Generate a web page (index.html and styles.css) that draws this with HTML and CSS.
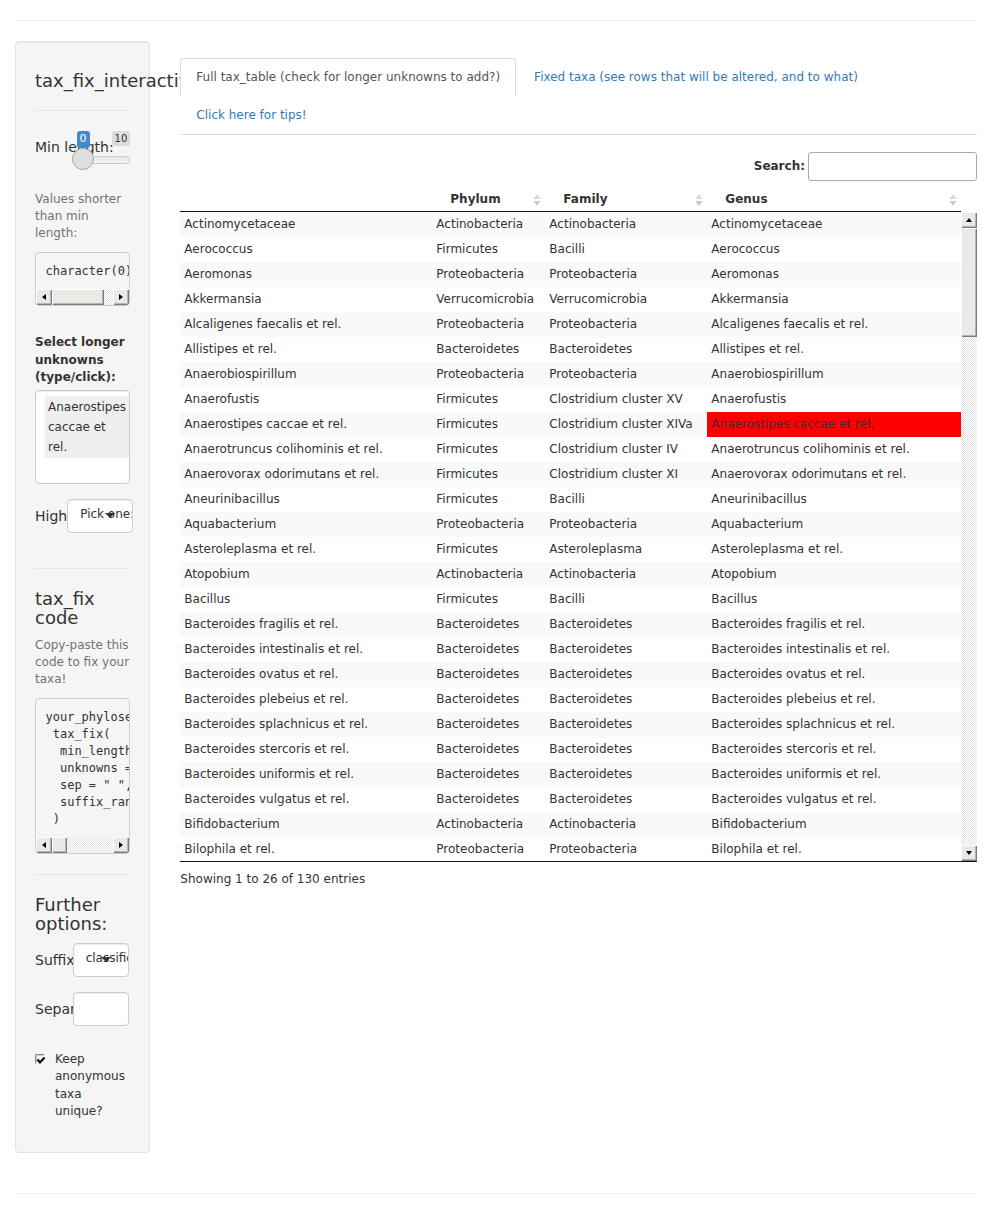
FILE: index.html
```html
<!DOCTYPE html>
<html lang="en">
<head>
<meta charset="utf-8">
<title>tax_fix_interactive</title>
<link rel="stylesheet" href="styles.css">
</head>
<body>
<div class="page">
  <hr class="rule">
  <div class="layout">
    <aside class="side-col">
      <div class="well">
        <h4 class="side-title">tax_fix_interactive</h4>
        <hr class="well-rule">
        <div class="slider-group">
          <label class="slider-label">Min length:</label>
          <div class="irs">
            <span class="irs-line"></span>
            <span class="irs-max">10</span>
            <span class="irs-handle"></span>
            <span class="irs-single">0</span>
          </div>
        </div>
        <p class="help">Values shorter than min length:</p>
        <div class="out out-gap">
          <pre class="out-text">character(0)</pre>
          <div class="hscroll"><span class="sb-btn sb-left"></span><span class="sb-thumb thumb-a"></span><span class="sb-rest"></span><span class="sb-btn sb-right"></span></div>
        </div>

        <label class="sel-label">Select longer unknowns (type/click):</label>
        <div class="sel-multi">
          <div class="sel-item">Anaerostipes caccae et rel.</div>
          <div class="sel-input"></div>
        </div>

        <div class="inline-row row-last">
          <span class="inline-label w-high">Highlight:</span>
          <div class="box caret w-high-box">Pick one:</div>
        </div>

        <hr class="well-rule">
        <h4 class="side-title">tax_fix code</h4>
        <p class="help">Copy-paste this code to fix your taxa!</p>
        <div class="out">
          <pre class="out-text">your_phyloseq %&gt;%
 tax_fix(
  min_length = 0,
  unknowns = c("Anaerostipes caccae et rel."),
  sep = " ", anon_unique = TRUE,
  suffix_rank = "classification"
 )</pre>
          <div class="hscroll"><span class="sb-btn sb-left"></span><span class="sb-thumb thumb-b"></span><span class="sb-rest"></span><span class="sb-btn sb-right"></span></div>
        </div>

        <hr class="well-rule">
        <h4 class="side-title">Further options:</h4>
        <div class="inline-row">
          <span class="inline-label w-suffix">Suffix rank:</span>
          <div class="box caret w-box">classification</div>
        </div>
        <div class="inline-row">
          <span class="inline-label w-suffix">Separator:</span>
          <input class="box w-box text-input" type="text" value="">
        </div>
        <label class="check">
          <span class="cb"><svg width="13" height="13" viewBox="0 0 13 13"><path d="M0.5 9.5V0.5H9.5" fill="none" stroke="#8a8a8a" stroke-width="1"/><path d="M1.5 8.5V1.5H8.5" fill="none" stroke="#c8c8c8" stroke-width="1"/><path d="M2.5 5.5L5 8.5L9.5 3.5" fill="none" stroke="#000" stroke-width="2"/></svg></span>
          <span>Keep anonymous taxa unique?</span>
        </label>
      </div>
    </aside>

    <main class="main-col">
      <ul class="tabs">
        <li class="tab active"><a href="#">Full tax_table (check for longer unknowns to add?)</a></li>
        <li class="tab"><a href="#">Fixed taxa (see rows that will be altered, and to what)</a></li>
        <li class="tab"><a href="#">Click here for tips!</a></li>
      </ul>

      <div class="dt-filter">
        <label for="q">Search:</label>
        <input id="q" type="search">
      </div>

      <div class="dt-head">
        <table class="dt">
          <colgroup><col class="c1"><col class="c2"><col class="c3"><col></colgroup>
          <thead>
            <tr>
              <th class="th-blank"></th>
              <th><div class="th-in"><span>Phylum</span><svg class="sort" width="8" height="14" viewBox="0 0 8 14"><path d="M4 1L7.5 6H0.5Z" fill="#d8d8d8"/><path d="M4 13L7.5 8H0.5Z" fill="#c8c8c8"/></svg></div></th>
              <th><div class="th-in"><span>Family</span><svg class="sort" width="8" height="14" viewBox="0 0 8 14"><path d="M4 1L7.5 6H0.5Z" fill="#d8d8d8"/><path d="M4 13L7.5 8H0.5Z" fill="#c8c8c8"/></svg></div></th>
              <th><div class="th-in"><span>Genus</span><svg class="sort" width="8" height="14" viewBox="0 0 8 14"><path d="M4 1L7.5 6H0.5Z" fill="#d8d8d8"/><path d="M4 13L7.5 8H0.5Z" fill="#c8c8c8"/></svg></div></th>
            </tr>
          </thead>
        </table>
      </div>
      <div class="dt-body">
        <div class="dt-view">
        <table class="dt">
          <colgroup><col class="c1"><col class="c2"><col class="c3"><col></colgroup>
          <tbody>
            <tr class="odd"><td>Actinomycetaceae</td><td>Actinobacteria</td><td>Actinobacteria</td><td>Actinomycetaceae</td></tr>
            <tr><td>Aerococcus</td><td>Firmicutes</td><td>Bacilli</td><td>Aerococcus</td></tr>
            <tr class="odd"><td>Aeromonas</td><td>Proteobacteria</td><td>Proteobacteria</td><td>Aeromonas</td></tr>
            <tr><td>Akkermansia</td><td>Verrucomicrobia</td><td>Verrucomicrobia</td><td>Akkermansia</td></tr>
            <tr class="odd"><td>Alcaligenes faecalis et rel.</td><td>Proteobacteria</td><td>Proteobacteria</td><td>Alcaligenes faecalis et rel.</td></tr>
            <tr><td>Allistipes et rel.</td><td>Bacteroidetes</td><td>Bacteroidetes</td><td>Allistipes et rel.</td></tr>
            <tr class="odd"><td>Anaerobiospirillum</td><td>Proteobacteria</td><td>Proteobacteria</td><td>Anaerobiospirillum</td></tr>
            <tr><td>Anaerofustis</td><td>Firmicutes</td><td>Clostridium cluster XV</td><td>Anaerofustis</td></tr>
            <tr class="odd"><td>Anaerostipes caccae et rel.</td><td>Firmicutes</td><td>Clostridium cluster XIVa</td><td class="hl">Anaerostipes caccae et rel.</td></tr>
            <tr><td>Anaerotruncus colihominis et rel.</td><td>Firmicutes</td><td>Clostridium cluster IV</td><td>Anaerotruncus colihominis et rel.</td></tr>
            <tr class="odd"><td>Anaerovorax odorimutans et rel.</td><td>Firmicutes</td><td>Clostridium cluster XI</td><td>Anaerovorax odorimutans et rel.</td></tr>
            <tr><td>Aneurinibacillus</td><td>Firmicutes</td><td>Bacilli</td><td>Aneurinibacillus</td></tr>
            <tr class="odd"><td>Aquabacterium</td><td>Proteobacteria</td><td>Proteobacteria</td><td>Aquabacterium</td></tr>
            <tr><td>Asteroleplasma et rel.</td><td>Firmicutes</td><td>Asteroleplasma</td><td>Asteroleplasma et rel.</td></tr>
            <tr class="odd"><td>Atopobium</td><td>Actinobacteria</td><td>Actinobacteria</td><td>Atopobium</td></tr>
            <tr><td>Bacillus</td><td>Firmicutes</td><td>Bacilli</td><td>Bacillus</td></tr>
            <tr class="odd"><td>Bacteroides fragilis et rel.</td><td>Bacteroidetes</td><td>Bacteroidetes</td><td>Bacteroides fragilis et rel.</td></tr>
            <tr><td>Bacteroides intestinalis et rel.</td><td>Bacteroidetes</td><td>Bacteroidetes</td><td>Bacteroides intestinalis et rel.</td></tr>
            <tr class="odd"><td>Bacteroides ovatus et rel.</td><td>Bacteroidetes</td><td>Bacteroidetes</td><td>Bacteroides ovatus et rel.</td></tr>
            <tr><td>Bacteroides plebeius et rel.</td><td>Bacteroidetes</td><td>Bacteroidetes</td><td>Bacteroides plebeius et rel.</td></tr>
            <tr class="odd"><td>Bacteroides splachnicus et rel.</td><td>Bacteroidetes</td><td>Bacteroidetes</td><td>Bacteroides splachnicus et rel.</td></tr>
            <tr><td>Bacteroides stercoris et rel.</td><td>Bacteroidetes</td><td>Bacteroidetes</td><td>Bacteroides stercoris et rel.</td></tr>
            <tr class="odd"><td>Bacteroides uniformis et rel.</td><td>Bacteroidetes</td><td>Bacteroidetes</td><td>Bacteroides uniformis et rel.</td></tr>
            <tr><td>Bacteroides vulgatus et rel.</td><td>Bacteroidetes</td><td>Bacteroidetes</td><td>Bacteroides vulgatus et rel.</td></tr>
            <tr class="odd"><td>Bifidobacterium</td><td>Actinobacteria</td><td>Actinobacteria</td><td>Bifidobacterium</td></tr>
            <tr><td>Bilophila et rel.</td><td>Proteobacteria</td><td>Proteobacteria</td><td>Bilophila et rel.</td></tr>
          </tbody>
        </table>
        </div>
        <div class="vscroll"><span class="sb-btn sb-up"></span><span class="sb-thumb thumb-v"></span><span class="sb-rest"></span><span class="sb-btn sb-down"></span></div>
      </div>
      <div class="dt-info">Showing 1 to 26 of 130 entries</div>
    </main>
  </div>
  <hr class="rule">
</div>
</body>
</html>
```

FILE: styles.css
```css
* { box-sizing: border-box; }
html, body { margin: 0; }
body {
  font-family: "DejaVu Sans", sans-serif;
  font-size: 12px;
  line-height: 1.42857;
  color: #333;
  background: #fff;
}
.page { padding: 0 15px; }
.rule { border: 0; border-top: 1px solid #eee; margin: 20px 0; height: 0; }

.layout {
  display: grid;
  grid-template-columns: 135.33px 1fr;
  column-gap: 30px;
  align-items: start;
}

/* ---------- classic scrollbars ---------- */
.hscroll, .vscroll {
  display: flex;
  flex: none;
  background-color: #fff;
  background-image: repeating-conic-gradient(#e4e4e4 0 25%, #fff 0 50%);
  background-size: 2px 2px;
}
.hscroll { height: 16px; flex-direction: row; }
.vscroll { width: 16px; flex-direction: column; }
.sb-btn {
  flex: none;
  width: 16px; height: 16px;
  display: flex; align-items: center; justify-content: center;
  background: #ebe9e5;
  box-shadow: inset 1px 1px 0 #fff, inset -1px -1px 0 #7c7c7c, inset -2px -2px 0 #b5b5b5;
}
.sb-btn::after { content: ""; border-style: solid; border-color: transparent; }
.sb-up::after { border-width: 0 3.5px 4px; border-bottom-color: #000; margin: -1px 1px 0 0; }
.sb-down::after { border-width: 4px 3.5px 0; border-top-color: #000; margin: 0 1px 0 0; }
.sb-left::after { border-width: 3.5px 4px 3.5px 0; border-right-color: #000; margin: 0 1px 1px 0; }
.sb-right::after { border-width: 3.5px 0 3.5px 4px; border-left-color: #000; margin: 0 0 1px 0; }
.sb-thumb {
  flex: none;
  background: #ebe9e5;
  box-shadow: inset 1px 1px 0 #fff, inset -1px -1px 0 #7c7c7c, inset -2px -2px 0 #b5b5b5;
}
.sb-rest { flex: 1 1 auto; }
.thumb-a { width: 52px; }
.thumb-b { width: 15px; }
.thumb-v { height: 109px; }

/* ---------- sidebar ---------- */
.well {
  background: #f5f5f5;
  border: 1px solid #e3e3e3;
  border-radius: 4px;
  box-shadow: inset 0 1px 1px rgba(0,0,0,.05);
  padding: 19px;
  margin-bottom: 20px;
}
.side-title { font-size: 18px; font-weight: normal; line-height: 19px; margin: 10px 0; }
.well-rule { border: 0; border-top: 1px solid #e6e6e6; margin: 20px 0; height: 0; }

.slider-group { display: grid; margin-bottom: 20px; }
.slider-group > * { grid-area: 1 / 1; }
.slider-label { font-size: 14px; line-height: 20px; margin-top: 6px; align-self: start; }
.irs { position: relative; height: 40px; margin-left: 37px; }
.irs-line {
  position: absolute; left: 0; right: 0; top: 25px; height: 8px;
  border: 1px solid #ccc; border-radius: 8px;
  background: linear-gradient(to bottom, #dedede -50%, #fff 150%);
}
.irs-handle {
  position: absolute; left: 0; top: 17px; width: 22px; height: 22px;
  border: 1px solid #ababab; background: #dedede; border-radius: 50%;
}
.irs-single {
  position: absolute; left: 4.5px; top: 0;
  padding: 1px 3px; font-size: 11px; line-height: 1.333;
  background: #428bca; color: #fff; border-radius: 3px;
}
.irs-max {
  position: absolute; right: 0; top: 0;
  padding: 1px 3px; font-size: 10px; line-height: 1.333;
  background: rgba(0,0,0,.1); color: #333; border-radius: 3px;
}

.help { color: #737373; margin: 5px 0 10px; }

.out {
  background: #f5f5f5;
  border: 1px solid #ccc;
  border-radius: 4px;
  margin: 0 0 10px;
  overflow: hidden;
}
.out-text {
  font-family: "DejaVu Sans Mono", monospace;
  font-size: 12px;
  line-height: 17px;
  color: #333;
  margin: 0;
  padding: 9.5px;
  white-space: pre;
  overflow: hidden;
}
.out-gap { margin-bottom: 28px; }

.sel-label { display: block; font-weight: bold; margin-bottom: 4px; }
.sel-multi {
  display: flex; flex-wrap: wrap;
  background: #fff; border: 1px solid #ccc; border-radius: 4px;
  box-shadow: inset 0 1px 1px rgba(0,0,0,.075);
  padding: 5px 9px 2px;
  margin-bottom: 15px;
}
.sel-item { background: #efefef; padding: 1px 3px; margin: 0 3px 3px 0; line-height: 20px; }
.sel-input { flex: 0 0 100%; height: 20px; }

.inline-row { display: flex; align-items: center; margin-bottom: 15px; }
.row-last { margin-bottom: 35px; }
.inline-label { flex: none; font-size: 14px; line-height: 20px; white-space: nowrap; overflow: hidden; }
.w-high { width: 32.2px; }
.w-suffix { width: 37.7px; }
.box {
  flex: none;
  position: relative;
  height: 34px;
  padding: 6px 12px;
  line-height: 20px;
  font: inherit;
  color: #333;
  background: #fff;
  border: 1px solid #ccc;
  border-radius: 4px;
  box-shadow: inset 0 1px 1px rgba(0,0,0,.075);
  white-space: nowrap;
  overflow: hidden;
}
.w-high-box { width: 66px; }
.w-box { width: 56.6px; }
.text-input { outline: none; }
.caret::after {
  content: "";
  position: absolute;
  right: 17px; top: 50%; margin-top: -3px;
  border-style: solid; border-width: 5px 5px 0 5px;
  border-color: #333 transparent transparent transparent;
}

.check { display: flex; align-items: flex-start; gap: 7px; margin: 25px 0 13px; }
.cb { flex: none; width: 13px; height: 13px; margin-top: 3px; display: block; }
.cb svg { display: block; }

/* ---------- main ---------- */
.main-col { min-width: 0; }
.tabs {
  display: flex; flex-wrap: wrap;
  list-style: none; margin: 17px 0 0; padding: 0;
  border-bottom: 1px solid #ddd;
}
.tab { position: relative; margin-bottom: -1px; }
.tab a {
  display: block;
  padding: 10px 15px;
  margin-right: 2px;
  line-height: 17px;
  color: #337ab7;
  text-decoration: none;
  border: 1px solid transparent;
  border-radius: 4px 4px 0 0;
}
.tab.active a { color: #555; background: #fff; border-color: #ddd; border-bottom-color: transparent; }

.dt-filter { display: flex; justify-content: flex-end; align-items: center; margin-top: 17px; }
.dt-filter label { font-weight: bold; }
.dt-filter input {
  width: 169px; height: 29px; margin-left: 3px;
  border: 1px solid #aaa; border-radius: 3px; padding: 5px;
  background: transparent; font: inherit; outline: none;
}

.dt-head { margin-top: 7px; padding-right: 16px; }
.dt { width: 100%; table-layout: fixed; border-collapse: separate; border-spacing: 0; }
.c1 { width: 252px; }
.c2 { width: 113px; }
.c3 { width: 162px; }
.dt th {
  text-align: left; font-weight: bold; line-height: 17px;
  padding: 3px 4px 3px 18px;
  border-bottom: 1px solid #111;
}
.th-in { display: flex; justify-content: space-between; align-items: center; }
.sort { display: block; flex: none; }

.dt-body { display: flex; height: 650px; border-bottom: 1px solid #111; }
.dt-view { flex: 1 1 auto; min-width: 0; overflow: hidden; }
.dt td { padding: 4px; line-height: 17px; white-space: nowrap; overflow: hidden; }
.dt tr.odd td { background: #f9f9f9; }
.dt tr td.hl { background: #ff0000; }

.dt-info { padding-top: 9px; line-height: 17px; }
```
